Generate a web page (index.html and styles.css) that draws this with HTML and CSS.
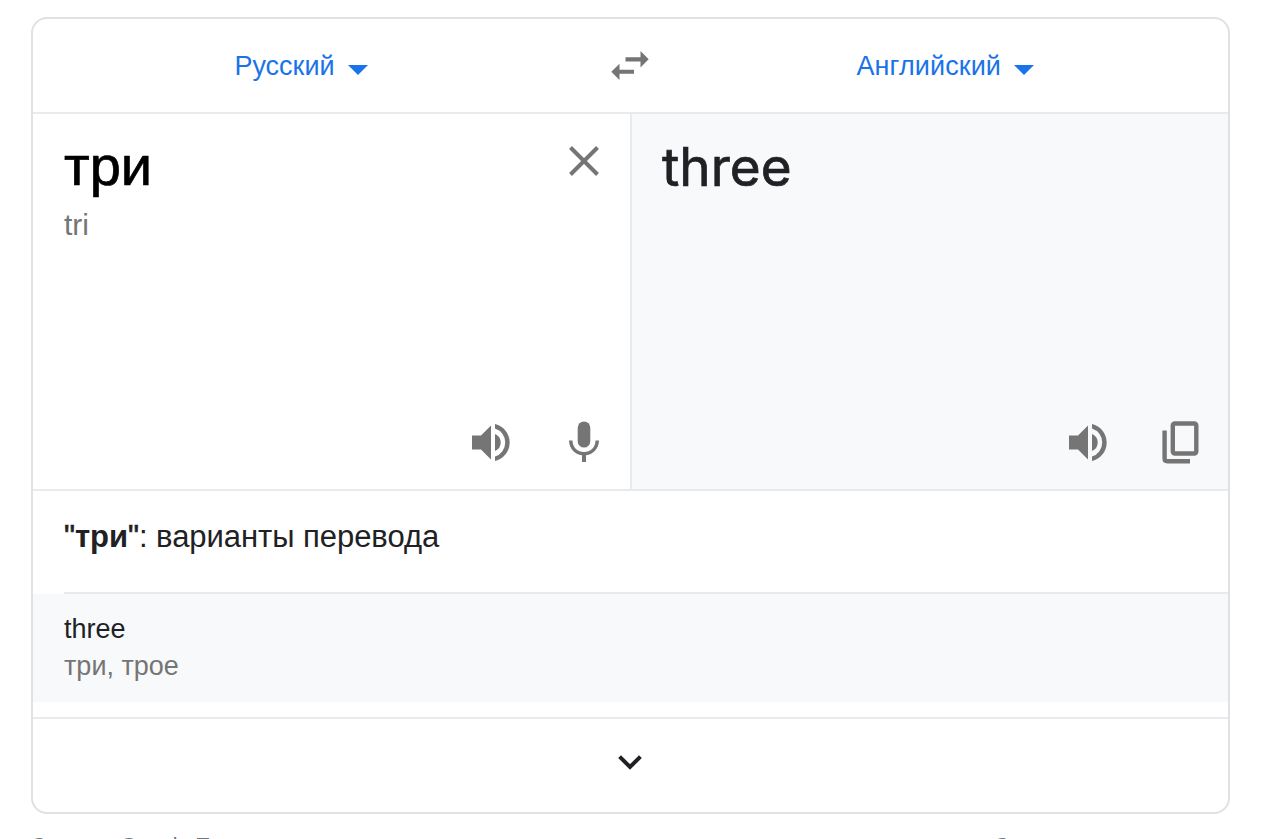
FILE: index.html
```html
<!DOCTYPE html>
<html lang="ru">
<head>
  <meta charset="UTF-8" />
  <meta name="viewport" content="width=device-width, initial-scale=1" />
  <title>Переводчик</title>
  <link rel="stylesheet" href="styles.css">
</head>
<body>
  <div class="card">
    <div class="langs">
      <div class="lang source-lang"><span>Русский</span><i class="caret"></i></div>
      <svg class="swap" width="38" height="30" viewBox="0 0 38 30"><path d="M14.500 6.200h15V0L37.700 8.200l-8.200 8.200v-6h-15zM23 18.700H8.500v-6L.3 20.800l8.200 8.200v-6.300H23z"/></svg>
      <div class="lang target-lang"><span>Английский</span><i class="caret"></i></div>
    </div>

    <div class="panes">
      <div class="pane source">
        <div class="pane-top">
          <div class="word">три</div>
          <svg class="close" width="30" height="30" viewBox="0 0 30 30"><path d="M1.500 1.500l27 27M28.500 1.500l-27 27"/></svg>
        </div>
        <div class="translit">tri</div>
        <div class="tools">
          <svg width="38" height="40" viewBox="0 0 38 40"><path d="M0 13.500h9l10-10v34l-10-10H0zM23 12a9.200 9.200 0 0 1 0 17zM23 2a19 19 0 0 1 0 37v-4.500a14.700 14.700 0 0 0 0-28z"/></svg>
          <svg class="mic" width="30" height="42" viewBox="0 0 30 42"><rect x="8.700" y="0.500" width="12.600" height="26" rx="6.300"/><path d="M0 19.500h3.500c0 7.200 5.300 11.500 11.500 11.500s11.500-4.300 11.500-11.500H30c0 7.800-5.700 13.800-13 14.800v6.700h-4v-6.700C5.700 33.300 0 27.300 0 19.500z"/></svg>
        </div>
      </div>
      <div class="pane target">
        <div class="word result">three</div>
        <div class="tools">
          <svg width="38" height="40" viewBox="0 0 38 40"><path d="M0 13.500h9l10-10v34l-10-10H0zM23 12a9.200 9.200 0 0 1 0 17zM23 2a19 19 0 0 1 0 37v-4.500a14.700 14.700 0 0 0 0-28z"/></svg>
          <svg class="copy" width="37" height="44" viewBox="0 0 37 44"><rect x="10.800" y="3.500" width="23.500" height="30" rx="2"/><path d="M2.600 10.500v28q0 2.700 2.700 2.700H28"/></svg>
        </div>
      </div>
    </div>

    <div class="variants-title"><span class="quote">"</span><b>три</b><span class="quote">"</span>: варианты перевода</div>
    <div class="variant">
      <div>three</div>
      <div class="back">три, трое</div>
    </div>
    <div class="expand">
      <svg width="24" height="15" viewBox="0 0 24 15"><path d="M1.600 1.600L12 12l10.400-10.400"/></svg>
    </div>
  </div>

  <div class="links">
    <span>Открыть Google Переводчик</span>
    <span class="feedback">Отправить отзыв</span>
  </div>
</body>
</html>
```
FILE: styles.css
```css
* { box-sizing: border-box; }
body {
  margin: 0;
  padding: 17px 50px 0 31px;
  height: 839px;
  overflow: hidden;
  background: #fff;
  color: #202124;
  font-family: "Liberation Sans", Arial, sans-serif;
}
svg { display: block; flex: none; fill: #757575; }
.card {
  width: 1198.500px;
  height: 797px;
  border: 2px solid #dfe1e5;
  border-radius: 16px;
  overflow: hidden;
}
.langs {
  display: grid;
  grid-template-columns: 536px 122px 1fr;
  align-items: center;
  height: 95px;
  border-bottom: 2px solid #e8eaed;
}
.lang {
  display: flex;
  align-items: center;
  justify-content: center;
  color: #1a73e8;
  font-size: 27px;
  line-height: 32px;
}
.target-lang { padding-right: 28px; }
.target-lang span { letter-spacing: .1px; }
.caret {
  margin: 8px 0 0 13px;
  border: 10px solid transparent;
  border-top-color: #1a73e8;
  border-bottom: 0;
}
.swap { justify-self: center; }
.panes {
  display: grid;
  grid-template-columns: 599px 1fr;
  height: 377px;
  border-bottom: 2px solid #e8eaed;
}
.pane {
  display: flex;
  flex-direction: column;
  padding: 20px 31px 26px;
}
.source { border-right: 2px solid #e8eaed; }
.target { background: #f8f9fb; padding: 21px 29px 25px 30px; }
.pane-top { display: flex; justify-content: space-between; }
.word { color: #000; font-size: 56px; line-height: 64px; -webkit-text-stroke: .7px; }
.result { color: #202124; font-family: Inter, sans-serif; font-size: 53px; }
.close { margin-top: 12px; fill: none; stroke: #757575; stroke-width: 4; }
.translit { color: #757575; font-size: 30px; line-height: 34px; margin-top: 10px; }
.tools {
  display: flex;
  align-items: flex-end;
  justify-content: flex-end;
  gap: 59px;
  margin-top: auto;
}
.tools svg:first-child { margin-bottom: 1px; }
.target .tools { gap: 55px; }
.target .tools svg:first-child { margin-bottom: 2px; }
.copy { fill: none; stroke: #757575; stroke-width: 4.400; }
.variants-title {
  height: 103px;
  margin-left: 31px;
  padding-top: 28px;
  border-bottom: 2px solid #e8eaed;
  font-size: 31px;
  letter-spacing: -.05px;
  line-height: 36px;
}
.quote { -webkit-text-stroke: .6px; }
.variant {
  height: 108px;
  padding: 17px 31px;
  background: #f8f9fb;
  font-size: 27px;
  line-height: 37px;
}
.back { color: #757575; }
.expand {
  display: flex;
  justify-content: center;
  height: 95px;
  margin-top: 15px;
  padding-top: 36px;
  border-top: 2px solid #e8eaed;
}
.expand svg { fill: none; stroke: #202124; stroke-width: 4; }
.links {
  display: grid;
  grid-template-columns: 963px 1fr;
  padding-top: 20px;
  color: #70757a;
  font-size: 21.300px;
  line-height: 25px;
  white-space: nowrap;
}
```
